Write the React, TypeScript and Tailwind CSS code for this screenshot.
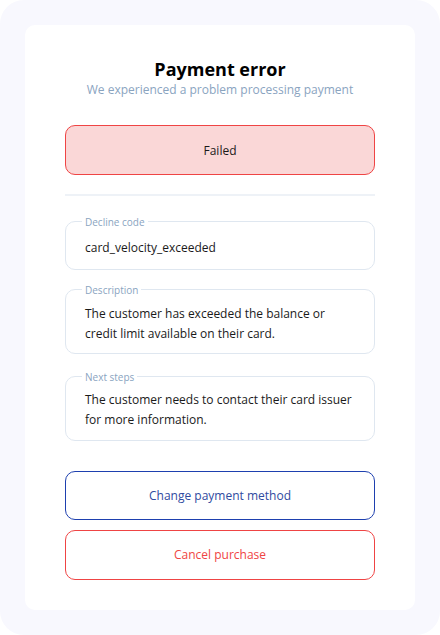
import React from 'react';

const Field: React.FC<{ label: string; children: React.ReactNode; className?: string }> = ({ label, children, className }) => (
  <fieldset className={`border border-[#dfe7f0] rounded-[10px] px-[19px] ${className ?? ''}`}>
    <legend className="-ml-[3px] px-[3px] text-[10px] leading-[14px] text-[#8aa4bf]">{label}</legend>
    <div className="text-[12px] leading-[20px] text-[#1a1a1a]">{children}</div>
  </fieldset>
);

export default function App() {
  return (
    <div
      className="w-[440px] h-[635px] bg-[#f8f8fe] rounded-[24px] p-[25px]"
      style={{ fontFamily: '"Open Sans", "Noto Sans", sans-serif' }}
    >
      <div className="bg-white rounded-[10px] px-10 pt-[32px] pb-[30px] h-full flex flex-col">
        {/* Header */}
        <h1 className="text-center text-[18px] leading-[24px] font-bold text-black">Payment error</h1>
        <p className="text-center text-[12px] leading-[18px] text-[#8aa4bf]">
          We experienced a problem processing payment
        </p>

        {/* Status */}
        <div className="mt-[26px] h-[50px] rounded-[10px] border border-[#ef4444] bg-[#fad7d7] flex items-center justify-center text-[12px] leading-[20px] pt-[2px] text-[#1a1a1a]">
          Failed
        </div>

        <div className="mt-[19px] h-[2px] bg-[#eef2f7]" />

        {/* Details */}
        <Field label="Decline code" className="mt-[19px] pt-[9px] pb-[11px]">card_velocity_exceeded</Field>
        <Field label="Description" className="mt-[13px] pt-[7px] pb-[9px]">
          The customer has exceeded the balance or credit limit available on their card.
        </Field>
        <Field label="Next steps" className="mt-[16px] pt-[6px] pb-[10px]">
          The customer needs to contact their card issuer for more information.
        </Field>

        {/* Actions */}
        <button className="mt-[30px] h-[50px] rounded-[10px] border border-[#1e40af] text-[12px] text-[#2f4aa0]">
          Change payment method
        </button>
        <button className="mt-[10px] h-[50px] rounded-[10px] border border-[#ef4444] text-[12px] text-[#ef4444]">
          Cancel purchase
        </button>
      </div>
    </div>
  );
}
